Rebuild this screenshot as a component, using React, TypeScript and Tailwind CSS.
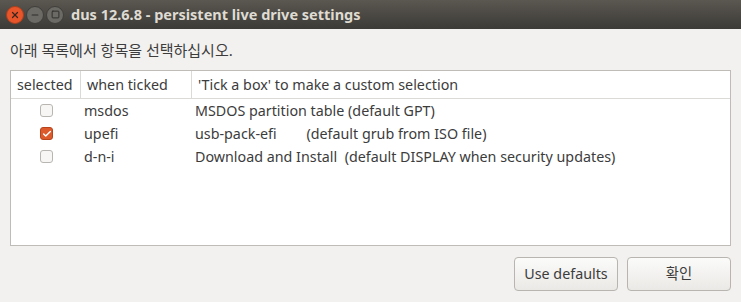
import { Check, Minus, Square, X } from "lucide-react";

const rows = [
  { on: false, key: "msdos", desc: "MSDOS partition table (default GPT)" },
  { on: true, key: "upefi", desc: "usb-pack-efi\u00a0\u00a0\u00a0\u00a0\u00a0\u00a0\u00a0\u00a0(default grub from ISO file)" },
  { on: false, key: "d-n-i", desc: "Download and Install\u00a0\u00a0(default DISPLAY when security updates)" },
];

function Box({ on }: { on: boolean }) {
  if (on) {
    return (
      <span className="w-[13px] h-[13px] rounded-[3px] bg-[#dd5a2c] border border-[#b8441c] flex items-center justify-center">
        <Check size={10} strokeWidth={3.5} className="text-white" />
      </span>
    );
  }
  return <span className="w-[13px] h-[13px] rounded-[3px] bg-[#f7f6f5] border border-[#b9b6b1]" />;
}

export default function App() {
  return (
    <div
      className="w-[741px] h-[302px] bg-[#f2f1f0] flex flex-col text-[#3c3c3c] overflow-hidden"
      style={{ fontFamily: '"Noto Sans", "Noto Sans CJK KR", sans-serif' }}
    >
      <div className="h-[29px] shrink-0 bg-gradient-to-b from-[#5b5751] to-[#3c3b37] flex items-center pl-[6px]">
        <div className="flex gap-[2px]">
          <span className="w-[18px] h-[18px] rounded-full bg-[#e9552b] border border-[#a8401e] flex items-center justify-center">
            <X size={10} strokeWidth={3} className="text-[#3a2620]" />
          </span>
          <span className="w-[18px] h-[18px] rounded-full bg-[#6b6a65] border border-[#3f3e3a] flex items-center justify-center">
            <Minus size={10} strokeWidth={2.5} className="text-[#2e2d2a]" />
          </span>
          <span className="w-[18px] h-[18px] rounded-full bg-[#6b6a65] border border-[#3f3e3a] flex items-center justify-center">
            <Square size={9} strokeWidth={2.5} className="text-[#2e2d2a]" />
          </span>
        </div>
        <span className="ml-[7px] text-[14.5px] font-bold text-[#dfdbd2]">
          dus 12.6.8 - persistent live drive settings
        </span>
      </div>

      <div className="flex-1 flex flex-col px-[10px] pt-[11px] pb-[11px]">
        <div className="text-[15px] leading-[20px] h-[30px]">아래 목록에서 항목을 선택하십시오.</div>

        <div className="h-[176px] bg-white border border-[#bfbcb8] flex flex-col">
          <div className="h-[28px] flex items-center border-b border-[#dcdad7] text-[14.3px]">
            <div className="w-[70px] h-full flex items-center pl-[6px] border-r border-[#dcdad7]">selected</div>
            <div className="w-[111px] h-full flex items-center pl-[6px] border-r border-[#dcdad7]">when ticked</div>
            <div className="flex-1 h-full flex items-center pl-[6px]">'Tick a box' to make a custom selection</div>
          </div>
          <div>
            {rows.map((r) => (
              <div key={r.key} className="h-[23px] flex items-center text-[14.3px]">
                <div className="w-[70px] flex justify-center pl-[1px]">
                  <Box on={r.on} />
                </div>
                <div className="w-[111px] pl-[3px]">{r.key}</div>
                <div className="flex-1 pl-[3px] whitespace-pre">{r.desc}</div>
              </div>
            ))}
          </div>
        </div>

        <div className="flex justify-end gap-[9px] mt-[11px]">
          <button className="w-[104px] h-[34px] rounded-[4px] border border-[#b8b5b0] bg-gradient-to-b from-[#fbfbfa] to-[#ebe9e6] text-[14.3px]">
            Use defaults
          </button>
          <button className="w-[104px] h-[34px] rounded-[4px] border border-[#b8b5b0] bg-gradient-to-b from-[#fbfbfa] to-[#ebe9e6] text-[14.3px]">
            확인
          </button>
        </div>
      </div>
    </div>
  );
}
